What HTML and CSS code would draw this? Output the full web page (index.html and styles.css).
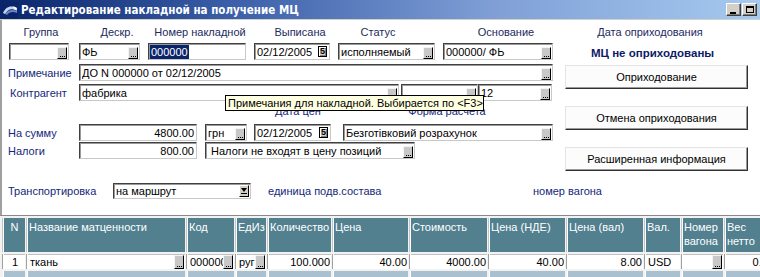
FILE: index.html
```html
<!DOCTYPE html>
<html lang="ru">
<head>
<meta charset="utf-8">
<title>Редактирование накладной на получение МЦ</title>
<link rel="stylesheet" href="styles.css">
</head>
<body>
<div class="window">
  <div class="titlebar">
    <svg class="appicon" width="16" height="16" viewBox="0 0 16 16">
      <rect width="16" height="16" fill="#0a246a"/>
      <path d="M1 11 C4 4, 9 3, 15 6 L15 9 C10 6, 6 7, 3 12 Z" fill="#c8d4f0"/>
      <path d="M3 12 C6 8, 10 7, 15 9 L15 11 C11 9, 7 10, 5 13 Z" fill="#6a86c8"/>
      <path d="M11 4 L15 6 L13 8 Z" fill="#ffffff"/>
    </svg>
    <span class="title">Редактирование накладной на получение МЦ</span>
    <div class="winbtns">
      <span class="wb"><i class="min"></i></span>
      <span class="wb"><i class="max"></i></span>
    </div>
  </div>

  <div class="body">
    <div class="hdr-labels">
      <span class="hl hl1">Группа</span>
      <span class="hl hl2">Дескр.</span>
      <span class="hl hl3">Номер накладной</span>
      <span class="hl hl4">Выписана</span>
      <span class="hl hl5">Статус</span>
      <span class="hl hl6">Основание</span>
      <span class="hl hl7">Дата оприходования</span>
    </div>

    <div class="row top-inputs">
      <div class="inp w-grp"><span class="txt"></span><span class="dots"></span></div>
      <div class="inp w-dsk"><span class="txt">ФЬ</span><span class="dots"></span></div>
      <div class="inp w-num"><span class="sel">000000</span></div>
      <div class="inp w-date"><span class="txt">02/12/2005</span><span class="cal">5</span></div>
      <div class="inp w-st"><span class="txt">исполняемый</span><span class="dots"></span></div>
      <div class="inp w-osn"><span class="txt">000000/ ФЬ</span><span class="dots"></span></div>
      <span class="status">МЦ не оприходованы</span>
    </div>

    <div class="mid">
      <div class="form">
        <div class="row r-note">
          <span class="lab lab-note">Примечание</span>
          <div class="inp w-note"><span class="txt">ДО N 000000 от 02/12/2005</span><span class="dots"></span></div>
        </div>
        <div class="row r-ka">
          <span class="lab lab-ka">Контрагент</span>
          <div class="inp w-ka1"><span class="txt">фабрика</span><span class="dots"></span></div>
          <div class="inp w-ka2"><span class="txt"></span><span class="dots"></span></div>
          <div class="inp w-ka3"><span class="txt">12</span><span class="dots"></span></div>
        </div>
        <div class="row r-cap">
          <span class="cap cap-date">Дата цен</span>
          <span class="cap cap-form">Форма расчета</span>
        </div>
        <div class="row r-sum">
          <span class="lab">На сумму</span>
          <div class="inp w-amt num"><span class="txt">4800.00</span></div>
          <div class="inp w-cur"><span class="txt">грн</span><span class="dots"></span></div>
          <div class="inp w-pdate"><span class="txt">02/12/2005</span><span class="cal">5</span></div>
          <div class="inp w-pay"><span class="txt">Безготівковий розрахунок</span><span class="dots"></span></div>
        </div>
        <div class="row r-tax">
          <span class="lab">Налоги</span>
          <div class="inp w-amt num"><span class="txt">800.00</span></div>
          <div class="inp w-taxm"><span class="txt">&nbsp;Налоги не входят в цену позиций</span><span class="dots"></span></div>
        </div>
      </div>
      <div class="actions">
        <div class="btn">Оприходование</div>
        <div class="btn">Отмена оприходования</div>
        <div class="btn">Расширенная информация</div>
      </div>
    </div>

    <div class="row r-trans">
      <span class="lab lab-tr">Транспортировка</span>
      <div class="inp combo"><span class="txt">на маршрут</span><span class="arrow"></span></div>
      <span class="cap cap-unit">единица подв.состава</span>
      <span class="cap">номер вагона</span>
    </div>
  </div>

  <div class="grid">
    <div class="hc c-n">N</div>
    <div class="hc">Название матценности</div>
    <div class="hc">Код</div>
    <div class="hc">ЕдИз</div>
    <div class="hc">Количество</div>
    <div class="hc">Цена</div>
    <div class="hc">Стоимость</div>
    <div class="hc">Цена (НДЕ)</div>
    <div class="hc">Цена (вал)</div>
    <div class="hc">Вал.</div>
    <div class="hc">Номер вагона</div>
    <div class="hc">Вес нетто</div>

    <div class="dc c-n">1</div>
    <div class="dc"><span class="txt">ткань</span><span class="dots tall"></span></div>
    <div class="dc"><span class="txt">000000</span><span class="dots tall"></span></div>
    <div class="dc"><span class="txt">руг</span><span class="dots tall"></span></div>
    <div class="dc r">100.000</div>
    <div class="dc r">40.00</div>
    <div class="dc r">4000.00</div>
    <div class="dc r">40.00</div>
    <div class="dc r">8.00</div>
    <div class="dc">USD</div>
    <div class="dc"><span class="txt"></span><span class="dots tall"></span></div>
    <div class="dc r">0.00</div>

    <div class="sc"></div><div class="sc"></div><div class="sc"></div><div class="sc"></div>
    <div class="sc"></div><div class="sc"></div><div class="sc"></div><div class="sc"></div>
    <div class="sc"></div><div class="sc"></div><div class="sc"></div><div class="sc"></div>
  </div>

  <div class="tooltip">Примечания для накладной. Выбирается по &lt;F3&gt;</div>
</div>
</body>
</html>
```

FILE: styles.css
```css
* { box-sizing: border-box; }
html, body { margin: 0; padding: 0; background: #fff; }
body { font-family: "Liberation Sans", Arial, sans-serif; font-size: 11px; color: #000; }

.window {
  position: relative;
  width: 760px;
  height: 277px;
  overflow: hidden;
  background: #fff;
}

/* title bar */
.titlebar {
  height: 20px;
  display: flex;
  align-items: center;
  background: linear-gradient(to right, #0a246a 0%, #3a5ea8 30%, #7f9fd6 65%, #a6caf0 100%);
  border-bottom: 1px solid #d4d0c8;
  padding-left: 2px;
}
.appicon { display: block; flex: none; }
.title {
  margin-left: 3px;
  color: #fff;
  font-family: "DejaVu Sans Condensed", "DejaVu Sans", Verdana, sans-serif;
  font-stretch: condensed;
  font-weight: bold;
  font-size: 11.5px;
  white-space: nowrap;
}
.winbtns { margin-left: auto; display: flex; margin-right: 3px; }
.wb {
  width: 15px; height: 13px;
  background: #d4d0c8;
  border-style: solid; border-width: 1px;
  border-color: #fff #404040 #404040 #fff;
  box-shadow: inset -1px -1px #808080;
  position: relative;
  display: block;
}
.wb + .wb { margin-left: 1px; }
.wb .min { position: absolute; left: 3px; top: 8px; width: 6px; height: 2px; background: #000; }
.wb .max { position: absolute; left: 3px; top: 2px; width: 8px; height: 7px; border: 1px solid #000; border-top-width: 2px; }

/* body */
.body {
  height: 195px;
  border-left: 2px solid #a0a0a0;
  overflow: hidden;
}
.row { display: flex; align-items: center; }

.hdr-labels { display: flex; margin-top: 5px; height: 14px; line-height: 14px; color: #1c2a5e; white-space: nowrap; }
.hl { text-align: center; flex: none; }
.hl1 { width: 78px; }
.hl2 { width: 66px; margin-left: 4px; }
.hl3 { width: 100px; }
.hl4 { width: 100px; }
.hl5 { width: 56px; }
.hl6 { width: 100px; margin-left: 50px; }
.hl7 { width: 120px; margin-left: 34px; }

/* inputs */
.inp {
  display: flex;
  align-items: center;
  height: 17px;
  flex: none;
  background: #fff;
  border-style: solid;
  border-width: 1px;
  border-color: #404040 #c8c8c8 #c8c8c8 #404040;
  box-shadow: inset 1px 1px #9a9a9a;
  padding-left: 2px;
  white-space: nowrap;
  overflow: hidden;
  line-height: 14px;
}
.inp .txt { flex: 1; overflow: hidden; }
.inp.num .txt { text-align: right; padding-right: 2px; }
.dots {
  flex: none;
  align-self: flex-end;
  position: relative;
  width: 10px;
  height: 12px;
  margin-left: auto;
  margin-right: 1px;
  background: #c8c8c8;
  border-style: solid;
  border-width: 1px;
  border-color: #f4f4f4 #000 #000 #f4f4f4;
}
.dots::after {
  content: "";
  position: absolute;
  left: 2px;
  bottom: 1px;
  width: 1px;
  height: 1px;
  background: #000;
  box-shadow: 2px 0 #000, 4px 0 #000;
}
.cal {
  flex: none;
  width: 9px; height: 11px;
  margin-right: 2px;
  border: 1px solid #000;
  box-shadow: inset 1px 1px #fff, inset -1px -1px #808080;
  background: #d4d0c8;
  font-size: 9px;
  font-weight: bold;
  line-height: 9px;
  text-align: center;
}
.sel { background: #0a246a; color: #fff; padding: 0 1px; line-height: 14px; margin-left: -1px; }

.top-inputs { margin-top: 4px; height: 17px; }
.w-grp { width: 60px; margin-left: 7px; }
.w-dsk { width: 61px; margin-left: 10px; }
.w-num { width: 98px; margin-left: 8px; }
.w-date { width: 76px; margin-left: 8px; }
.w-st { width: 97px; margin-left: 8px; }
.w-osn { width: 110px; margin-left: 8px; }
.status {
  flex: none;
  width: 122px;
  margin-left: 38px;
  text-align: center;
  font-weight: bold;
  font-size: 11.5px;
  white-space: nowrap;
  color: #0d1a68;
  margin-top: 3px;
}

/* middle section */
.mid { display: flex; margin-top: 4px; }
.form { width: 554px; flex: none; }
.lab { width: 77px; flex: none; padding-left: 6px; color: #14287a; white-space: nowrap; }
.lab-ka { padding-left: 8px; }
.r-note { height: 17px; }
.w-note { width: 474px; }
.r-ka { height: 17px; margin-top: 3px; }
.w-ka1 { width: 320px; }
.w-ka2 { width: 77px; margin-left: 2px; }
.w-ka3 { width: 74px; }
.r-cap { height: 14px; margin-top: 3px; }
.cap { color: #14287a; white-space: nowrap; flex: none; }
.cap-date { width: 88px; margin-left: 252px; text-align: center; }
.cap-form { width: 94px; margin-left: 58px; text-align: center; }
.r-sum { height: 17px; margin-top: 6px; }
.w-amt { width: 118px; }
.w-cur { width: 42px; margin-left: 8px; }
.w-pdate { width: 77px; margin-left: 7px; }
.w-pay { width: 210px; margin-left: 12px; }
.r-tax { height: 17px; margin-top: 1px; }
.w-taxm { width: 210px; margin-left: 8px; }

.actions { margin-left: 9px; padding-top: 1px; display: flex; flex-direction: column; gap: 17px; }
.btn {
  width: 183px;
  height: 24px;
  display: flex;
  align-items: center;
  justify-content: center;
  background: #fcfcfc;
  border-style: solid;
  border-width: 1px;
  border-color: #e4e4e4 #303030 #303030 #e4e4e4;
  box-shadow: inset -1px -1px #9a9a9a;
  color: #000;
}

/* transport row */
.r-trans { margin-top: 12px; height: 16px; }
.lab-tr { width: 111px; color: #14287a; }
.combo { width: 138px; height: 16px; }
.arrow {
  flex: none;
  width: 10px; height: 12px;
  margin-right: 1px;
  background: #d4d0c8;
  border-style: solid; border-width: 1px;
  border-color: #fff #000 #000 #fff;
  position: relative;
}
.arrow::before {
  content: "";
  position: absolute;
  left: 1px; top: 2px;
  border-left: 3px solid transparent;
  border-right: 3px solid transparent;
  border-top: 4px solid #000;
}
.arrow::after {
  content: "";
  position: absolute;
  left: 1px; top: 7px;
  width: 6px; height: 1px;
  background: #000;
}
.cap-unit { width: 265px; margin-left: 17px; }

/* grid */
.grid {
  display: grid;
  grid-template-columns: 22px 158px 47px 30px 63px 75px 77px 76px 76px 35px 41px 50px;
  grid-template-rows: 34px 15px 12px;
  column-gap: 2px;
  row-gap: 2px;
  padding: 2px 0 0 3px;
  border-top: 1px solid #8a8a8a;
  background: #f2f2f2;
  width: 800px;
}
.hc {
  background: #52808f;
  color: #fff;
  padding: 2px 1px 0 1px;
  line-height: 14px;
  border-left: 1px solid #fff;
  box-shadow: -1px 0 #c4c4c4;
  overflow: hidden;
}
.c-n { text-align: center; }
.dc {
  background: #fff;
  display: flex;
  align-items: center;
  padding-left: 2px;
  padding-right: 1px;
  border-left: 1px solid #fff;
  box-shadow: -1px 0 #a0a0a0, inset 0 1px #c0c0c0;
  white-space: nowrap;
  overflow: hidden;
  line-height: 14px;
}
.dc.c-n { justify-content: center; }
.dc.r { justify-content: flex-end; }
.dc .txt { flex: 1; overflow: hidden; }
.dots.tall { height: 14px; margin-right: 0; }
.sc { background: #a8c0cf; border-left: 1px solid #fff; }

/* tooltip overlay */
.tooltip {
  position: absolute;
  left: 225px;
  top: 95px;
  width: 259px;
  height: 16px;
  background: #ffffe1;
  border: 1px solid #000;
  padding-left: 2px;
  line-height: 14px;
  white-space: nowrap;
  color: #000;
}
```
